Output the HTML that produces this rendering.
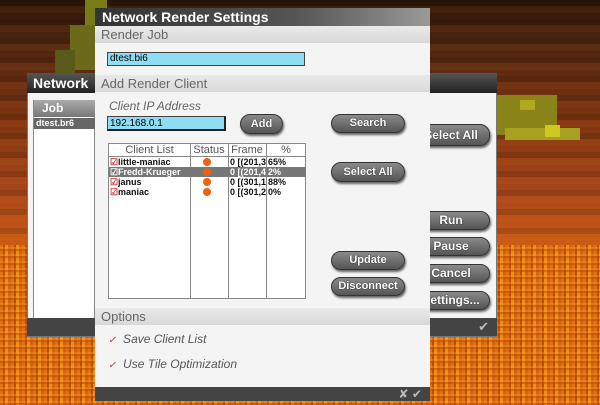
<!DOCTYPE html>
<html><head><style>
*{margin:0;padding:0;box-sizing:border-box}
body{width:600px;height:405px;overflow:hidden;position:relative;font-family:"Liberation Sans",sans-serif;
background:linear-gradient(180deg,#2a1608 0%,#4a2410 10%,#6a2e10 22%,#8a3a12 35%,#a8461a 48%,#c85a14 60%,#d86a10 70%,#e07414 100%);}
.abs{position:absolute}
.px{position:absolute;background:#9a9a10}
.hdr{position:absolute;background:linear-gradient(#eaeaea,#d8d8d8);color:#666;font-size:13px;padding-left:6px;line-height:17px}
.btn{position:absolute;border-radius:10px;background:linear-gradient(#8a8a8a,#555);color:#fff;font-weight:bold;font-size:11px;text-align:center;box-shadow:1px 2px 2px rgba(0,0,0,.6);border:1px solid #333;text-shadow:0 0 1px #000}
.inp{position:absolute;background:#8fdcf5;border:1px solid #444;font-size:10px;line-height:12px;padding-left:2px;color:#000}
.row{position:absolute;left:0;width:197px;height:10px;font-size:9px;line-height:10px;font-weight:bold;color:#111}
.row span{position:absolute}
.dot{position:absolute;left:94px;top:1px;width:8px;height:8px;border-radius:50%;background:#f06010}
</style></head><body>
<div class="abs" style="left:0;top:0;width:600px;height:245px;background:repeating-linear-gradient(180deg,rgba(0,0,0,.12) 0 6px,rgba(255,120,40,.08) 6px 13px,transparent 13px 19px)"></div>
<div class="abs" style="left:0;top:245px;width:600px;height:160px;background:repeating-linear-gradient(90deg,#e07010 0 3px,#b85008 3px 5px,#f08a18 5px 8px,#d06410 8px 11px),#e07010;"></div>
<div class="abs" style="left:0;top:245px;width:600px;height:160px;background:repeating-linear-gradient(0deg,rgba(180,70,0,.45) 0 2px,rgba(255,170,50,.3) 2px 4px,transparent 4px 7px)"></div>
<div class="px" style="left:85px;top:0;width:22px;height:25px;background:#7a7a18"></div>
<div class="px" style="left:70px;top:25px;width:30px;height:45px;background:#6a6a18"></div>
<div class="px" style="left:55px;top:50px;width:20px;height:25px;background:#5a5a18"></div>
<div class="px" style="left:497px;top:95px;width:60px;height:40px;background:#8a8418"></div>
<div class="px" style="left:505px;top:128px;width:75px;height:12px;background:#a8a020"></div>
<div class="px" style="left:520px;top:100px;width:15px;height:10px;background:#b0a820"></div>
<div class="px" style="left:545px;top:125px;width:15px;height:12px;background:#d0c820"></div>

<div class="abs" style="left:27px;top:73px;width:470px;height:264px;background:#f4f4f4;border:1px solid #777"></div>
<div class="abs" style="left:27px;top:73px;width:470px;height:20px;background:linear-gradient(#555,#222);color:#fff;font-weight:bold;font-size:14px;line-height:20px;padding-left:6px">Network</div>
<div class="abs" style="left:33px;top:100px;width:62px;height:226px;background:#fff;border:1px solid #888"></div>
<div class="abs" style="left:34px;top:100px;width:61px;height:17px;background:linear-gradient(#aaa,#777);color:#fff;font-weight:bold;font-size:12px;line-height:17px;padding-left:8px">Job</div>
<div class="abs" style="left:34px;top:118px;width:61px;height:11px;background:#666;color:#fff;font-size:9px;font-weight:bold;line-height:11px;padding-left:2px">dtest.br6</div>
<div class="abs" style="left:27px;top:318px;width:470px;height:18px;background:#444;color:#bbb;text-align:right;padding-right:8px;font-size:13px;line-height:18px">✔</div>
<div class="btn" style="left:412px;top:124px;width:78px;height:22px;line-height:20px;font-size:12px">Select All</div>
<div class="btn" style="left:412px;top:211px;width:78px;height:19px;line-height:17px;font-size:12px">Run</div>
<div class="btn" style="left:412px;top:237px;width:78px;height:19px;line-height:17px;font-size:12px">Pause</div>
<div class="btn" style="left:412px;top:264px;width:78px;height:19px;line-height:17px;font-size:12px">Cancel</div>
<div class="btn" style="left:412px;top:291px;width:78px;height:19px;line-height:17px;font-size:12px">Settings...</div>

<div class="abs" style="left:95px;top:8px;width:335px;height:392px;background:#f4f4f4"></div>
<div class="abs" style="left:95px;top:8px;width:335px;height:18px;background:linear-gradient(90deg,#333,#555 60%,#999);color:#fff;font-weight:bold;font-size:14px;line-height:18px;padding-left:7px">Network Render Settings</div>
<div class="hdr" style="left:95px;top:26px;width:335px;height:17px">Render Job</div>
<div class="inp" style="left:107px;top:52px;width:198px;height:14px">dtest.bi6</div>
<div class="hdr" style="left:95px;top:75px;width:335px;height:17px">Add Render Client</div>
<div class="abs" style="left:109px;top:99px;font-size:12px;font-style:italic;color:#666">Client IP Address</div>
<div class="inp" style="left:107px;top:116px;width:119px;height:15px;line-height:13px;border-right:2px solid #222;border-bottom:2px solid #222">192.168.0.1</div>
<div class="btn" style="left:240px;top:114px;width:43px;height:20px;line-height:18px">Add</div>
<div class="btn" style="left:331px;top:114px;width:74px;height:19px;line-height:17px">Search</div>
<div class="btn" style="left:331px;top:162px;width:74px;height:20px;line-height:18px">Select All</div>
<div class="btn" style="left:331px;top:251px;width:74px;height:19px;line-height:17px">Update</div>
<div class="btn" style="left:331px;top:277px;width:74px;height:19px;line-height:17px">Disconnect</div>
<div class="abs" style="left:108px;top:143px;width:198px;height:156px;background:#fff;border:1px solid #888">
 <div class="abs" style="left:81px;top:0;width:1px;height:155px;background:#888"></div>
 <div class="abs" style="left:119px;top:0;width:1px;height:155px;background:#888"></div>
 <div class="abs" style="left:157px;top:0;width:1px;height:155px;background:#888"></div>
 <div class="abs" style="left:0;top:12px;width:197px;height:1px;background:#888"></div>
 <div class="abs" style="left:0;top:0;width:81px;text-align:center;font-size:11px;color:#555;line-height:12px">Client List</div>
 <div class="abs" style="left:81px;top:0;width:38px;text-align:center;font-size:11px;color:#555;line-height:12px">Status</div>
 <div class="abs" style="left:119px;top:0;width:38px;text-align:center;font-size:11px;color:#555;line-height:12px">Frame</div>
 <div class="abs" style="left:157px;top:0;width:40px;text-align:center;font-size:11px;color:#555;line-height:12px">%</div>
 <div class="row" style="top:13px"><span style="left:1px;color:#c33">☑</span><span style="left:9px">little-maniac</span><div class="dot"></div><span style="left:121px;width:36px;overflow:hidden;white-space:nowrap">0 [(201,30</span><span style="left:159px">65%</span></div>
 <div class="row" style="top:23px;background:#777;color:#fff"><span style="left:1px">☑</span><span style="left:9px">Fredd-Krueger</span><div class="dot"></div><span style="left:121px;width:36px;overflow:hidden;white-space:nowrap">0 [(201,40</span><span style="left:159px">2%</span></div>
 <div class="row" style="top:33px"><span style="left:1px;color:#c33">☑</span><span style="left:9px">janus</span><div class="dot"></div><span style="left:121px;width:36px;overflow:hidden;white-space:nowrap">0 [(301,10</span><span style="left:159px">88%</span></div>
 <div class="row" style="top:43px"><span style="left:1px;color:#c33">☑</span><span style="left:9px">maniac</span><div class="dot"></div><span style="left:121px;width:36px;overflow:hidden;white-space:nowrap">0 [(301,20</span><span style="left:159px">0%</span></div>
</div>
<div class="hdr" style="left:95px;top:308px;width:335px;height:17px">Options</div>
<div class="abs" style="left:108px;top:332px;font-size:12px;font-style:italic;color:#555"><span style="color:#c33;font-size:10px">✓</span>&nbsp;&nbsp;Save Client List</div>
<div class="abs" style="left:108px;top:357px;font-size:12px;font-style:italic;color:#555"><span style="color:#c33;font-size:10px">✓</span>&nbsp;&nbsp;Use Tile Optimization</div>
<div class="abs" style="left:95px;top:387px;width:335px;height:14px;background:#444;color:#bbb;text-align:right;padding-right:8px;font-size:12px;line-height:14px">✘ ✔</div>
</body></html>
